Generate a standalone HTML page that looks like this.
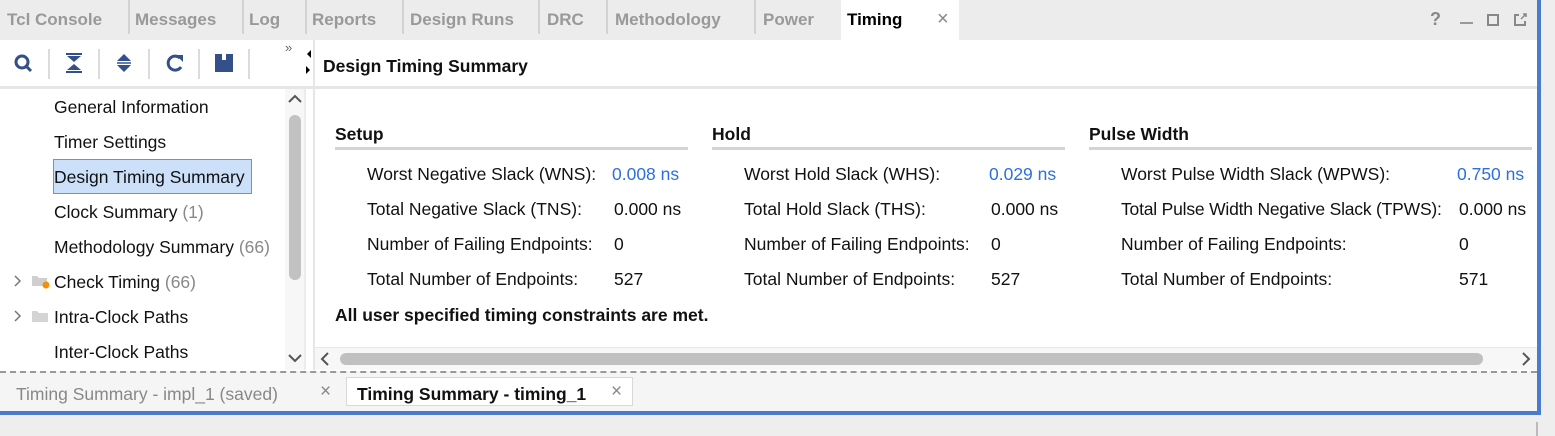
<!DOCTYPE html>
<html><head><meta charset="utf-8"><style>
*{margin:0;padding:0;box-sizing:border-box}
body{width:1555px;height:436px;overflow:hidden;background:#eeeeee;font-family:"Liberation Sans",sans-serif;font-size:17.5px;color:#111;position:relative}
.a{position:absolute;white-space:nowrap}
.tab{position:absolute;top:0;height:40px;line-height:40px;font-weight:bold;color:#999;font-size:17px}
.sep{position:absolute;top:0;width:2px;height:34px;background:#d2d2d2}
.tsep{position:absolute;top:49px;width:2px;height:30px;background:#dcdcdc}
.tr{position:absolute;left:54px;line-height:20px}
.g{color:#888}
.lbl{position:absolute;line-height:20px}
.v{position:absolute;line-height:20px}
.b{color:#2d6fe0}
.h{position:absolute;font-weight:bold;line-height:20px}
.ul{position:absolute;top:147px;height:3px;background:#d4d4d4}
</style></head><body>
<div class="a" style="left:0;top:0;width:1537px;height:411px;background:#fff"></div>
<div class="a" style="left:0;top:0;width:1537px;height:40px;background:#ececec"></div>
<div class="tab" style="left:7px">Tcl Console</div>
<div class="sep" style="left:128px"></div>
<div class="tab" style="left:135px">Messages</div>
<div class="sep" style="left:242px"></div>
<div class="tab" style="left:249px">Log</div>
<div class="sep" style="left:305px"></div>
<div class="tab" style="left:312px">Reports</div>
<div class="sep" style="left:402px"></div>
<div class="tab" style="left:410px">Design Runs</div>
<div class="sep" style="left:538px"></div>
<div class="tab" style="left:547px">DRC</div>
<div class="sep" style="left:606px"></div>
<div class="tab" style="left:615px">Methodology</div>
<div class="sep" style="left:754px"></div>
<div class="tab" style="left:763px">Power</div>
<div class="a" style="left:841px;top:0;width:118px;height:40px;background:#fff"></div>
<div class="tab" style="left:847px;color:#000">Timing</div>
<div class="a" style="left:937px;top:8px;color:#888;font-size:20px">×</div>
<div class="a" style="left:1430px;top:9px;color:#888;font-weight:bold;font-size:18px">?</div>
<div class="a" style="left:1460px;top:22px;width:13px;height:2px;background:#999"></div>
<div class="a" style="left:1487px;top:14px;width:12px;height:12px;border:2px solid #888"></div>
<svg class="a" style="left:1513px;top:13px" width="14" height="14"><path d="M6 2H2V12H12V8" fill="none" stroke="#888" stroke-width="2"/><path d="M8 6L13 1M10 1H13V4" fill="none" stroke="#888" stroke-width="1.5"/></svg>
<div class="a" style="left:1537px;top:0;width:4px;height:415px;background:#4a7ccc"></div>
<div class="a" style="left:0;top:411px;width:1541px;height:4px;background:#4a7ccc"></div>
<div class="a" style="left:1536px;top:422px;width:2px;height:14px;background:#bbb"></div>
<svg class="a" style="left:12px;top:52px" width="24" height="22"><circle cx="10" cy="10" r="6" fill="none" stroke="#34508a" stroke-width="3"/><path d="M14 14L19 19" stroke="#34508a" stroke-width="3"/></svg>
<div class="tsep" style="left:48px"></div>
<svg class="a" style="left:64px;top:52px" width="20" height="22"><path d="M2 2H18" stroke="#34508a" stroke-width="2"/><path d="M3 4H17L10 10Z" fill="#34508a"/><path d="M2 20H18" stroke="#34508a" stroke-width="2"/><path d="M3 18H17L10 12Z" fill="#34508a"/></svg>
<div class="tsep" style="left:98px"></div>
<svg class="a" style="left:114px;top:52px" width="20" height="22"><path d="M10 2L17 9H3Z" fill="#34508a"/><path d="M3 11H17" stroke="#34508a" stroke-width="1.5"/><path d="M10 20L17 13H3Z" fill="#34508a"/></svg>
<div class="tsep" style="left:148px"></div>
<svg class="a" style="left:164px;top:52px" width="22" height="22"><path d="M16 6A7 7 0 1 0 17 15" fill="none" stroke="#34508a" stroke-width="3"/><path d="M12 3L19 3L19 10Z" fill="#34508a"/></svg>
<div class="tsep" style="left:198px"></div>
<svg class="a" style="left:214px;top:52px" width="20" height="22"><path d="M1 2H8V8H12V2H19V20H1Z" fill="#34508a"/></svg>
<div class="tsep" style="left:248px"></div>
<div class="a" style="left:285px;top:40px;font-size:13px;color:#666">»</div>
<svg class="a" style="left:304px;top:48px" width="8" height="30"><path d="M7 2L3 6L7 10Z M2 18L6 22L2 26Z" fill="#000"/></svg>
<div class="a" style="left:0;top:86px;width:1537px;height:3px;background:#e6e6e6"></div>
<div class="a" style="left:313px;top:40px;width:2px;height:330px;background:#e6e6e6"></div>
<div class="a" style="left:304px;top:89px;width:2px;height:281px;background:#ececec"></div>
<div class="h" style="left:323px;top:56px">Design Timing Summary</div>
<div class="a" style="left:285px;top:89px;width:19px;height:281px;background:#f7f7f7"></div>
<svg class="a" style="left:287px;top:93px" width="16" height="12"><path d="M2 9L8 3L14 9" fill="none" stroke="#555" stroke-width="2"/></svg>
<div class="a" style="left:289px;top:115px;width:12px;height:165px;border-radius:6px;background:#c2c2c2"></div>
<svg class="a" style="left:287px;top:352px" width="16" height="12"><path d="M2 3L8 9L14 3" fill="none" stroke="#555" stroke-width="2"/></svg>
<div class="tr" style="top:97px">General Information</div>
<div class="tr" style="top:132px">Timer Settings</div>
<div class="a" style="left:53px;top:159px;width:199px;height:35px;background:#cce0fa;border:1px solid #5b9bd5"></div>
<div class="tr" style="top:167px">Design Timing Summary</div>
<div class="tr" style="top:202px">Clock Summary <span class="g">(1)</span></div>
<div class="tr" style="top:237px">Methodology Summary <span class="g">(66)</span></div>
<svg class="a" style="left:12px;top:274px" width="12" height="14"><path d="M3 2L8 7L3 12" fill="none" stroke="#777" stroke-width="1.5"/></svg>
<svg class="a" style="left:31px;top:273px" width="20" height="16"><path d="M1 3H6L8 5H16V13H1Z" fill="#cfcfcf"/><circle cx="15" cy="12" r="3.5" fill="#f0900c"/></svg>
<div class="tr" style="top:272px">Check Timing <span class="g">(66)</span></div>
<svg class="a" style="left:12px;top:309px" width="12" height="14"><path d="M3 2L8 7L3 12" fill="none" stroke="#777" stroke-width="1.5"/></svg>
<svg class="a" style="left:31px;top:308px" width="20" height="16"><path d="M1 3H6L8 5H17V14H1Z" fill="#d4d4d4"/></svg>
<div class="tr" style="top:307px">Intra-Clock Paths</div>
<div class="tr" style="top:342px">Inter-Clock Paths</div>
<div class="h" style="left:335px;top:124px">Setup</div>
<div class="ul" style="left:335px;width:353px"></div>
<div class="h" style="left:712px;top:124px">Hold</div>
<div class="ul" style="left:712px;width:353px"></div>
<div class="h" style="left:1089px;top:124px">Pulse Width</div>
<div class="ul" style="left:1089px;width:443px"></div>

<div class="lbl" style="left:367px;top:164px">Worst Negative Slack (WNS):</div>
<div class="lbl" style="left:367px;top:199px">Total Negative Slack (TNS):</div>
<div class="lbl" style="left:367px;top:234px">Number of Failing Endpoints:</div>
<div class="lbl" style="left:367px;top:269px">Total Number of Endpoints:</div>
<div class="v b" style="left:612px;top:164px">0.008 ns</div>
<div class="v" style="left:614px;top:199px">0.000 ns</div>
<div class="v" style="left:614px;top:234px">0</div>
<div class="v" style="left:614px;top:269px">527</div>

<div class="lbl" style="left:744px;top:164px">Worst Hold Slack (WHS):</div>
<div class="lbl" style="left:744px;top:199px">Total Hold Slack (THS):</div>
<div class="lbl" style="left:744px;top:234px">Number of Failing Endpoints:</div>
<div class="lbl" style="left:744px;top:269px">Total Number of Endpoints:</div>
<div class="v b" style="left:989px;top:164px">0.029 ns</div>
<div class="v" style="left:991px;top:199px">0.000 ns</div>
<div class="v" style="left:991px;top:234px">0</div>
<div class="v" style="left:991px;top:269px">527</div>

<div class="lbl" style="left:1121px;top:164px">Worst Pulse Width Slack (WPWS):</div>
<div class="lbl" style="left:1121px;top:199px;letter-spacing:-0.2px">Total Pulse Width Negative Slack (TPWS):</div>
<div class="lbl" style="left:1121px;top:234px">Number of Failing Endpoints:</div>
<div class="lbl" style="left:1121px;top:269px">Total Number of Endpoints:</div>
<div class="v b" style="left:1457px;top:164px">0.750 ns</div>
<div class="v" style="left:1459px;top:199px">0.000 ns</div>
<div class="v" style="left:1459px;top:234px">0</div>
<div class="v" style="left:1459px;top:269px">571</div>

<div class="h" style="left:335px;top:305px">All user specified timing constraints are met.</div>
<div class="a" style="left:315px;top:347px;width:1222px;height:23px;background:#f7f7f7;border-top:1px solid #e8e8e8"></div>
<svg class="a" style="left:318px;top:351px" width="14" height="16"><path d="M10 2L4 8L10 14" fill="none" stroke="#555" stroke-width="2"/></svg>
<div class="a" style="left:340px;top:353px;width:1143px;height:12px;border-radius:6px;background:#c0c0c0"></div>
<svg class="a" style="left:1519px;top:351px" width="14" height="16"><path d="M4 2L10 8L4 14" fill="none" stroke="#555" stroke-width="2"/></svg>
<div class="a" style="left:0;top:371px;width:1537px;height:40px;background:#f5f5f5;border-top:2px dashed #999"></div>
<div class="a g" style="left:16px;top:384px;line-height:20px">Timing Summary - impl_1 (saved)</div>
<div class="a g" style="left:320px;top:381px;font-size:19px">×</div>
<div class="a" style="left:346px;top:377px;width:287px;height:29px;background:#fff;border:1px solid #d8d8d8"></div>
<div class="a" style="left:357px;top:384px;font-weight:bold;line-height:20px">Timing Summary - timing_1</div>
<div class="a g" style="left:611px;top:381px;font-size:19px">×</div>
</body></html>
